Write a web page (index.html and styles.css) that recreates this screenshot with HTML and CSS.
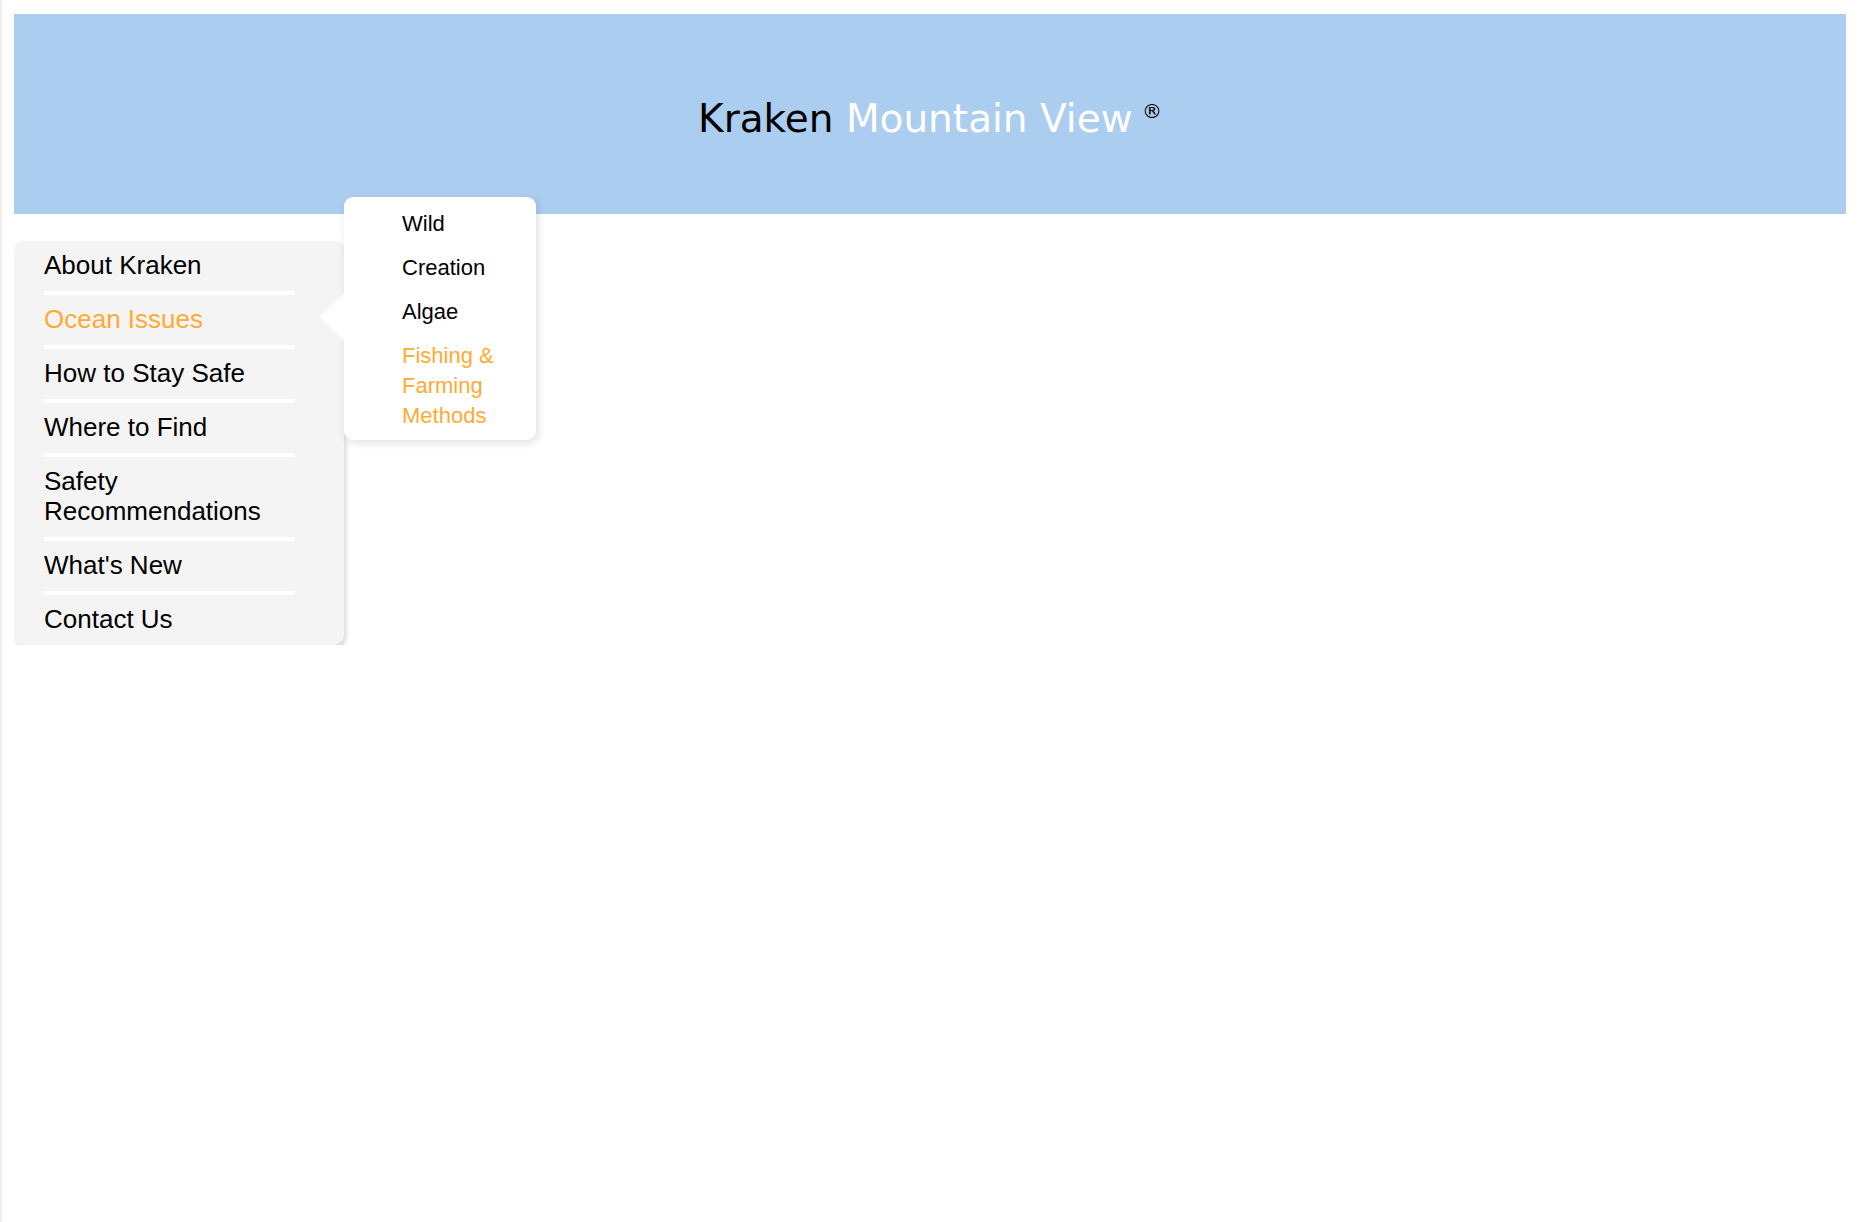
FILE: index.html
```html
<!DOCTYPE html>
<html lang="en">
<head>
<meta charset="utf-8">
<title>Kraken Mountain View</title>
<link rel="stylesheet" href="styles.css">
</head>
<body>
<header class="banner">
  <h1 class="title"><span class="t-dark">Kraken</span> <span class="t-light">Mountain View</span> <span class="reg">®</span></h1>
</header>
<nav class="menu">
  <ul class="menu-list">
    <li class="menu-item">About Kraken</li>
    <li class="menu-item active">Ocean Issues</li>
    <li class="menu-item">How to Stay Safe</li>
    <li class="menu-item">Where to Find</li>
    <li class="menu-item">Safety Recommendations</li>
    <li class="menu-item">What's New</li>
    <li class="menu-item last">Contact Us</li>
  </ul>
  <div class="submenu">
    <ul class="sub-list">
      <li class="sub-item">Wild</li>
      <li class="sub-item">Creation</li>
      <li class="sub-item">Algae</li>
      <li class="sub-item active">Fishing &amp; Farming Methods</li>
    </ul>
  </div>
</nav>
</body>
</html>
```
FILE: styles.css
```css
html {
  border-left: 2px solid #efefef;
  min-height: 100%;
  box-sizing: border-box;
  background: #fff;
}
body {
  margin: 14px 14px 0 12px;
  font-family: "Liberation Sans", Arial, sans-serif;
  color: #000;
}
.banner {
  background: #abcdef;
  height: 200px;
  display: flex;
  align-items: center;
  justify-content: center;
  padding-top: 9px;
  box-sizing: border-box;
}
.title {
  margin: 0;
  font-family: "DejaVu Sans", sans-serif;
  font-weight: normal;
  font-size: 39px;
  line-height: 46px;
  white-space: nowrap;
}
.t-dark { color: #000; }
.t-light { color: #fff; }
.reg {
  font-size: 20px;
  line-height: 0;
  vertical-align: 14px;
  margin-left: -3px;
  color: #000;
}
.menu {
  position: relative;
  width: 330px;
  margin-top: 27px;
}
.menu-list {
  list-style: none;
  margin: 0;
  padding: 0;
  background: #f4f4f4;
  border-radius: 10px;
  box-shadow: 2px 3px 5px rgba(0, 0, 0, 0.16);
}
.menu-item {
  margin: 0 50px 0 30px;
  padding: 9px 0 11px;
  font-size: 26px;
  line-height: 30px;
  border-bottom: 4px solid #fff;
}
.menu-item.last { border-bottom: none; }
.menu-item.active { color: #ffaa33; }
.submenu {
  position: absolute;
  left: 330px;
  top: -44px;
  width: 192px;
  background: #fff;
  border-radius: 9px;
  box-shadow: 2px 3px 9px rgba(0, 0, 0, 0.12);
  z-index: 2;
}
.submenu::before {
  content: "";
  position: absolute;
  left: -17px;
  top: 103px;
  width: 34px;
  height: 34px;
  background: #fff;
  transform: rotate(45deg);
  z-index: -1;
}
.sub-list {
  list-style: none;
  margin: 0;
  padding: 12px 20px 9px 58px;
}
.sub-item {
  font-size: 22px;
  line-height: 30px;
  margin-bottom: 14px;
}
.sub-item:last-child { margin-bottom: 0; }
.sub-item.active { color: #ffaa33; }
```
